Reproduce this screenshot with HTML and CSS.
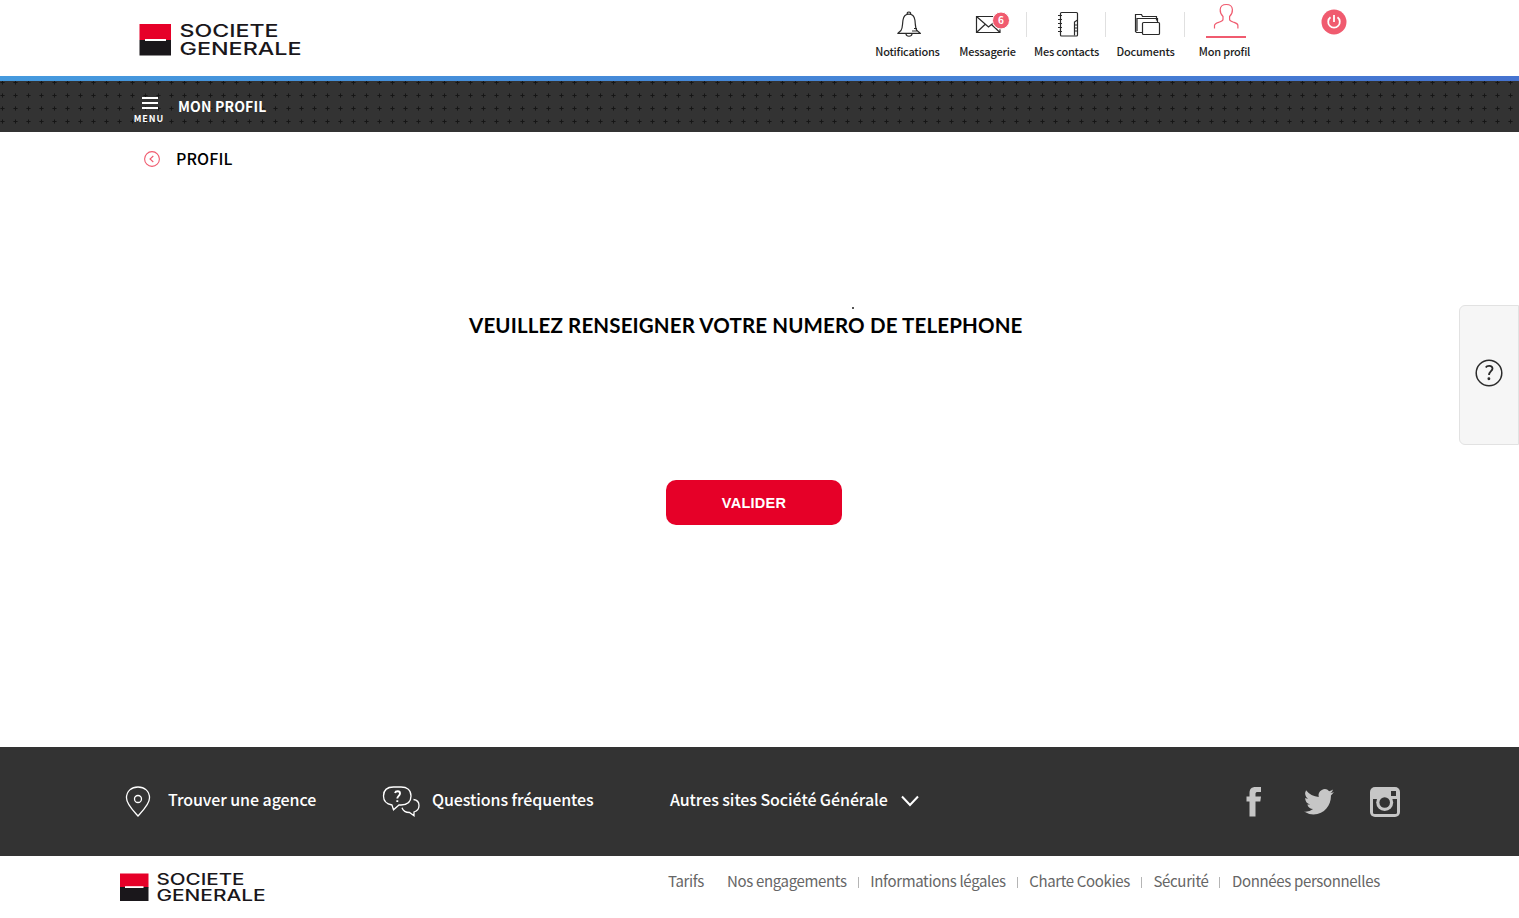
FILE: index.html
```html
<!DOCTYPE html>
<html lang="fr">
<head>
<meta charset="utf-8">
<title>Mon profil</title>
<link rel="stylesheet" href="styles.css">
</head>
<body>
<header class="header">
  <svg class="logo" width="162" height="32" viewBox="0 0 162 32">
    <rect x=".5" width="31.500" height="16" fill="#e60028"/>
    <rect x=".5" y="16" width="31.500" height="15.500" fill="#1a171b"/>
    <rect x="6" y="15" width="21" height="2" fill="#fff"/>
    <g class="logo-text">
      <text x="40.500" y="13.200" textLength="99" lengthAdjust="spacingAndGlyphs">SOCIETE</text>
      <text x="40.500" y="30.700" textLength="122" lengthAdjust="spacingAndGlyphs">GENERALE</text>
    </g>
  </svg>
  <nav class="tools">
    <a class="tool">
      <svg class="line-icon" width="79" height="42" viewBox="869 0 79 42">
        <path d="M907.500 14.500c-.8-1-.2-2.500 1.400-2.500s2.300 1.500 1.400 2.500M901 30.500c1.800-2.500 1.300-6 2-10.500.7-4 3-5.800 5.900-5.800s5.300 1.800 6 5.800c.6 4.500.2 8 2 10.500 1.200 1.200 2.800 1.500 3.300 2.800H898c.4-1.300 2-1.600 3-2.800zM906 34c.3 3 5.700 3 6 0M914 28.500h3M912 31h6"/>
      </svg>
      <span class="tool-label t1">Notifications</span>
    </a>
    <a class="tool sep">
      <svg class="line-icon" width="79" height="42" viewBox="948 0 79 42">
        <path d="M994 16.500h-17.500v16H1000V27M976.500 16.500l12 10.500 6-5M976.500 32.500l8.500-8M991.500 24.500l8.500 8"/>
        <circle class="badge" cx="1001" cy="20.500" r="8.500"/>
        <text class="badge-text" x="1001" y="24.300">6</text>
      </svg>
      <span class="tool-label">Messagerie</span>
    </a>
    <a class="tool sep">
      <svg class="line-icon" width="79" height="42" viewBox="1027 0 79 42">
        <rect x="1060.500" y="12.500" width="17" height="23.500" rx="1"/>
        <path d="M1058 15.500h4M1058 19.500h4M1058 23.500h4M1058 27.500h4M1058 31.500h4M1077.500 20l-3 2v13.500M1074.500 25h3M1074.500 28h3M1074.500 31h3"/>
      </svg>
      <span class="tool-label">Mes contacts</span>
    </a>
    <a class="tool sep">
      <svg class="line-icon" width="79" height="42" viewBox="1106 0 79 42">
        <path d="M1142 32.500h-5.500l-1-1v-17h6l1 2h14v4M1137 31V18.500h20.500V22"/>
        <rect x="1142.500" y="22.500" width="17" height="12" rx="1"/>
      </svg>
      <span class="tool-label">Documents</span>
    </a>
    <a class="tool">
      <svg class="line-icon pink" width="79" height="42" viewBox="1185 0 79 42">
        <path d="M1214.500 28.500v-3c0-2 2-2.500 4.500-3.300 2.500-.8 4-1.400 4-2.700v-3c-2-2-3-4-2.800-7 .2-3.500 2.700-5 6.100-5s5.900 1.500 6.100 5c.2 3-.8 5-2.800 7v3c0 1.300 1.500 1.900 4 2.700 2.300.8 4.300 1.300 4.300 3.300v3"/>
        <path class="underline" d="M1206 37h40"/>
      </svg>
      <span class="tool-label">Mon profil</span>
    </a>
  </nav>
  <svg class="power" width="26" height="26" viewBox="0 0 26 26">
    <circle cx="13" cy="13" r="12.500" fill="#f05b6f"/>
    <path d="M9.500 8.200a5.800 5.800 0 1 0 7 0M13 6v7" fill="none" stroke="#fff" stroke-width="1.800"/>
  </svg>
</header>

<div class="titlebar">
  <div class="menu">
    <i class="bar"></i><i class="bar"></i><i class="bar"></i>
    <span class="menu-label">MENU</span>
  </div>
  <span class="page-title">MON PROFIL</span>
</div>

<main class="main">
  <div class="crumb">
    <svg width="16" height="16" viewBox="0 0 16 16" fill="none" stroke="#f05b6f" stroke-width="1.100"><circle cx="8" cy="8" r="7.400"/><path d="M9.300 5L6 8l3.300 3"/></svg>
    <span>PROFIL</span>
  </div>
  <i class="dot"></i>
  <h1 class="heading">VEUILLEZ RENSEIGNER VOTRE NUMERO DE TELEPHONE</h1>
  <span class="button">VALIDER</span>
  <aside class="help">
    <svg width="28" height="28" viewBox="0 0 28 28" fill="none" stroke="#2b2b2b" stroke-width="1.500"><circle cx="14" cy="14" r="12.800"/><path d="M10.800 8.500c1-2 6.500-2.500 6.700 1 .1 2.500-3.500 3-3.500 6.500" stroke-width="1.800"/><circle cx="13.900" cy="19.700" r=".7" fill="#2b2b2b"/></svg>
  </aside>
</main>

<section class="links">
  <svg class="pin" width="26" height="32" viewBox="0 0 26 32"><path d="M13 30C10 26.500 1.500 18.500 1.500 12 1.500 5 6.500 1 13 1s11.500 4 11.500 11C24.500 18.500 16 26.500 13 30z"/><circle cx="13" cy="13" r="3.500"/></svg>
  <span class="link l1">Trouver une agence</span>
  <svg class="faq" width="38" height="32" viewBox="0 0 38 32"><path d="M10 19C4 18 1.500 14.500 1.500 10c0-6 4-9 10-9H19c6 0 10 3 10 9s-4 9-10 9h-2l-5.500 4.800zM31.500 13.500c3.500.5 5.500 3 5.500 6 0 3.500-1.500 5.500-5 6.500v3.800L27.500 26.500c-4 0-6.500-2-7.500-4.800"/><path d="M13 7c.7-2.300 5-2.500 5 .5 0 2.200-2.700 2.500-2.700 5M15.300 14.300v1.800" stroke-width="1.900"/></svg>
  <span class="link l2">Questions fréquentes</span>
  <span class="link l3">Autres sites Société Générale</span>
  <svg class="chevron" width="18" height="12" viewBox="0 0 18 12"><path d="M1 1.500l8 8.500 8-8.500" stroke-width="2"/></svg>
  <div class="social">
    <svg width="15" height="31" viewBox="0 0 15 31"><path d="M3.500 30.500V15.500H.5v-5h3V7C3.500 3 5.500 1 9.500 1H15v5h-3.200c-1.700 0-2.300.5-2.300 2v2.500H15l-.7 5H9.500v15z"/></svg>
    <svg width="30" height="26" viewBox="0 0 24 20" preserveAspectRatio="none"><path d="M23.950 2.400a10 10 0 0 1-2.820.77 4.900 4.900 0 0 0 2.160-2.720 9.900 9.900 0 0 1-3.130 1.200 4.920 4.920 0 0 0-8.380 4.480A13.900 13.900 0 0 1 1.640 1a4.900 4.900 0 0 0 1.520 6.570 4.900 4.900 0 0 1-2.230-.62v.06a4.920 4.920 0 0 0 3.950 4.830 5 5 0 0 1-2.210.08 4.940 4.940 0 0 0 4.600 3.420A9.900 9.900 0 0 1 0 17.370a14 14 0 0 0 7.550 2.210c9.050 0 14-7.500 14-13.980l-.02-.64a10 10 0 0 0 2.420-2.560z"/></svg>
    <svg width="30" height="30" viewBox="0 0 30 30"><rect width="30" height="30" rx="5"/><g class="hole"><path d="M3 12h24v13.500a1.500 1.500 0 0 1-1.500 1.500h-21a1.500 1.500 0 0 1-1.500-1.500z"/><path d="M21 4h5v5h-5z"/></g><circle cx="14.700" cy="15.500" r="8.500"/><circle class="hole" cx="14.700" cy="15.500" r="5.300"/></svg>
  </div>
</section>

<footer class="footer">
  <svg class="footer-logo" width="146" height="28" viewBox="0 0 146 28">
    <rect y=".5" width="28.500" height="14" fill="#e60028"/>
    <rect y="14" width="28.500" height="14" fill="#1a171b"/>
    <rect x="5" y="13.200" width="18.500" height="1.800" fill="#fff"/>
    <g class="logo-text small">
      <text x="36.500" y="12.200" textLength="88" lengthAdjust="spacingAndGlyphs">SOCIETE</text>
      <text x="36.500" y="27.700" textLength="109" lengthAdjust="spacingAndGlyphs">GENERALE</text>
    </g>
  </svg>
  <nav class="legal">
    <a class="g1">Tarifs</a><a>Nos engagements</a><i></i><a>Informations légales</a><i></i><a>Charte Cookies</a><i></i><a>Sécurité</a><i></i><a>Données personnelles</a>
  </nav>
</footer>
</body>
</html>
```
FILE: styles.css
```css
* { box-sizing: border-box; }
body {
  margin: 0;
  width: 1519px;
  height: 918px;
  overflow: hidden;
  display: flex;
  flex-direction: column;
  background: #fff;
  color: #000;
  font-family: "Noto Sans CJK SC", "Open Sans", sans-serif;
  white-space: nowrap;
}
svg { display: block; flex: none; overflow: visible; }
.logo-text {
  font: 500 17.500px Inter, "Liberation Sans", sans-serif;
  fill: #1a171b;
}
.small { font-size: 15.800px; }

.header { height: 76px; flex: none; display: flex; align-items: flex-start; }
.logo { margin: 24px 0 0 139px; }
.tools { display: flex; margin-left: 568px; }
.tool { width: 79px; height: 76px; display: flex; flex-direction: column; align-items: center; }
.sep {
  background: linear-gradient(#e0e0e0, #e0e0e0) 100% 12px / 1px 25px no-repeat;
}
.line-icon { fill: none; stroke: #2a2a2a; stroke-width: 1.2; }
.pink { stroke: #f05b6f; }
.underline { stroke-width: 2; }
.badge { fill: #f05b6f; stroke: #fff; stroke-width: 1; }
.badge-text {
  font: 700 10px "Noto Sans CJK SC", sans-serif;
  fill: #fff;
  stroke: none;
  text-anchor: middle;
}
.tool-label { font-size: 11px; font-weight: 500; line-height: 18px; letter-spacing: -0.22px; color: #1d1d1d; }
.t1 { margin-right: 2px; }
.power { margin: 9px 0 0 57px; }

.titlebar {
  height: 56px;
  flex: none;
  display: flex;
  border-style: solid;
  border-width: 5px 0 0;
  border-image: linear-gradient(90deg, #459ade, #4573d0) 1;
  background:
    radial-gradient(1.100px 1.100px at 6.500px 6.500px, #151515 90%, transparent) -4px -5px / 13px 13px,
    radial-gradient(2.600px 0.800px at 6.500px 6.500px, #222 80%, transparent) -4px -5px / 13px 13px,
    radial-gradient(0.800px 2.600px at 6.500px 6.500px, #222 80%, transparent) -4px -5px / 13px 13px,
    #333;
  color: #fff;
}
.menu { width: 34px; margin: 16px 0 0 132px; display: flex; flex-direction: column; align-items: center; }
.bar { width: 16px; height: 2px; margin-bottom: 3px; margin-left: 2px; background: #fff; }
.menu-label { margin-top: 1px; font-size: 9px; font-weight: 700; line-height: 12px; letter-spacing: 1px; }
.page-title { margin: 15px 0 0 12px; font-size: 14px; font-weight: 700; line-height: 20px; letter-spacing: 0.15px; }

.main { flex: none; height: 615px; position: relative; display: flex; flex-direction: column; }
.crumb { display: flex; align-items: center; gap: 16px; height: 24px; margin: 15px 0 0 144px; font-size: 16px; font-weight: 500; }
.crumb span { margin-top: -2px; letter-spacing: 0.1px; }
.dot { width: 2px; height: 2px; margin: 136px 0 0 852px; background: #555; }
.heading {
  margin: 3px 0 0 469px;
  font: 700 20.500px/26px Lato, "Open Sans", sans-serif;
  letter-spacing: 0.14px;
}
.button {
  width: 176px;
  height: 45px;
  margin: 142px 0 0 666px;
  border-radius: 10px;
  background: #e60028;
  color: #fff;
  font: 700 14.500px/47px "Liberation Sans", Arial, sans-serif;
  letter-spacing: 0.25px;
  text-align: center;
}
.help {
  position: absolute;
  top: 173px;
  right: 0;
  width: 60px;
  height: 140px;
  display: flex;
  align-items: center;
  justify-content: center;
  padding-bottom: 4px;
  border: 1px solid #e2e2e2;
  border-radius: 6px 0 0 6px;
  background: #f6f6f6;
}

.links { height: 109px; flex: none; display: flex; align-items: flex-start; background: #333; color: #fff; }
.links > svg { fill: none; stroke: #fff; stroke-width: 1.3; }
.link { margin-top: 40px; font-size: 16px; font-weight: 500; line-height: 24px; letter-spacing: -0.08px; }
.pin { margin: 39px 17px 0 125px; }
.faq { margin: 39px 12px 0 0; }
.l1 { width: 214px; }
.l2 { width: 238px; }
.l3 { width: 231px; }
.chevron { margin-top: 48px; }
.social { display: flex; align-items: center; margin: 39px 0 0 327px; height: 31px; fill: #c6c6c6; }
.social svg + svg { margin-left: 43px; }
.social svg:last-child { margin-left: 36px; }
.hole { fill: #333; }

.footer { height: 62px; flex: none; display: flex; align-items: flex-start; }
.footer-logo { margin: 17px 0 0 120px; }
.legal { display: flex; align-items: center; height: 24px; margin: 14px 0 0 402px; font-size: 15px; line-height: 22px; letter-spacing: -0.34px; color: #666; }
.legal a { margin-top: -2px; }
.legal i { width: 1px; height: 11px; margin: 0 11.500px 0 11px; background: #b5b5b5; }
.legal .g1 { margin-right: 23px; }
```
